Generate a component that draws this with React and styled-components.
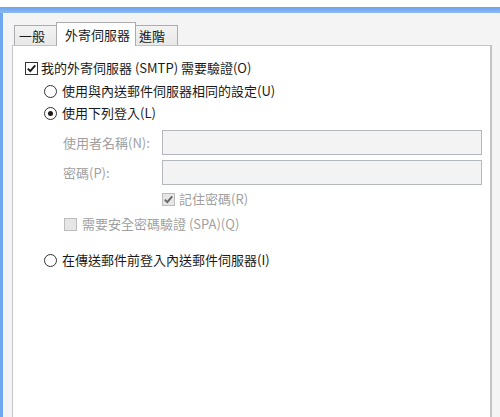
import styled, { createGlobalStyle } from "styled-components";

const GlobalStyle = createGlobalStyle`
  html, body {
    margin: 0;
    padding: 0;
    background: #fff;
  }
  body {
    font-family: "Noto Sans CJK TC", "Liberation Sans", sans-serif;
    font-size: 13px;
    color: #1a1a1a;
  }
`;

const Screen = styled.div`
  height: 417px;
  overflow: hidden;
  padding-top: 7px;
  box-sizing: border-box;
  display: flex;
  flex-direction: column;
`;

const TitleEdge = styled.div`
  height: 6px;
  flex: none;
  background: linear-gradient(#6aa2ec, #8dbaf3);
`;

const Frame = styled.div`
  flex: 1;
  display: flex;
  flex-direction: column;
  background: #f4f4f4;
  border-left: 3px solid #71a7ee;
  padding: 0 8px 0 9px;
`;

const TabRow = styled.div`
  display: flex;
  align-items: flex-end;
  height: 32px;
  padding-left: 2px;
  position: relative;
  z-index: 1;
`;

const Tab = styled.div`
  box-sizing: border-box;
  height: ${(p) => (p.$active ? 24 : 20)}px;
  margin: 0 ${(p) => (p.$active ? -2 : 0)}px ${(p) => (p.$active ? -1 : 0)}px;
  padding: ${(p) => (p.$active ? "0 5px 0 8px" : "0 12px 0 4px")};
  border: 1px solid #acacac;
  border-bottom: none;
  background: ${(p) => (p.$active ? "#fff" : "linear-gradient(#f3f3f3, #e8e8e8)")};
  display: flex;
  align-items: center;
  line-height: 1;
  position: relative;
  z-index: ${(p) => (p.$active ? 2 : 1)};
  color: #1a1a1a;
`;

const Panel = styled.div`
  flex: 1;
  background: #fff;
  border: 1px solid #c4c4c4;
  border-right-width: 2px;
  border-bottom: none;
  padding: 13px 8px 0 12px;
`;

const Row = styled.div`
  display: flex;
  align-items: center;
  height: ${(p) => p.$h || 18}px;
  margin-top: ${(p) => p.$gap || 0}px;
  padding-left: ${(p) => p.$indent || 0}px;
  color: ${(p) => (p.$disabled ? "#a0a0a0" : "#1a1a1a")};
  white-space: nowrap;
  line-height: 18px;
`;

const Box = styled.span`
  width: 13px;
  height: 13px;
  box-sizing: border-box;
  flex: none;
  border: 1px solid ${(p) => (p.$disabled ? "#bcbcbc" : "#333")};
  background: ${(p) => (p.$disabled ? "#e6e6e6" : "#fff")};
  margin-right: ${(p) => p.$gap}px;
  display: flex;
  align-items: center;
  justify-content: center;
`;

const RadioCircle = styled.span`
  width: 13px;
  height: 13px;
  box-sizing: border-box;
  flex: none;
  border-radius: 50%;
  border: 1px solid #333;
  background: #fff;
  margin-right: 5px;
  display: flex;
  align-items: center;
  justify-content: center;

  &::after {
    content: "";
    width: 5px;
    height: 5px;
    border-radius: 50%;
    background: ${(p) => (p.$checked ? "#1a1a1a" : "transparent")};
  }
`;

const FieldLabel = styled.span`
  width: 99px;
  flex: none;
  color: #a0a0a0;
`;

const Input = styled.div`
  flex: 1;
  height: 25px;
  box-sizing: border-box;
  border: 1px solid #b4b7be;
  background: #f3f3f4;
`;

const Check = ({ checked, disabled, gap = 3 }) => (
  <Box $disabled={disabled} $gap={gap}>
    {checked && (
      <svg width="11" height="11" viewBox="0 0 11 11">
        <path
          d="M1.8 5.6 L4.3 8.2 L9.2 2.4"
          fill="none"
          stroke={disabled ? "#666" : "#1a1a1a"}
          strokeWidth="1.9"
        />
      </svg>
    )}
  </Box>
);

const App = () => {
	return (
		<Screen>
			<GlobalStyle />
			<TitleEdge />
			<Frame>
				<TabRow>
					<Tab>一般</Tab>
					<Tab $active>外寄伺服器</Tab>
					<Tab>進階</Tab>
				</TabRow>
				<Panel>
					<Row>
						<Check checked />
						我的外寄伺服器 (SMTP) 需要驗證(O)
					</Row>
					<Row $gap={5} $indent={19}>
						<RadioCircle />
						使用與內送郵件伺服器相同的設定(U)
					</Row>
					<Row $gap={4} $indent={19}>
						<RadioCircle $checked />
						使用下列登入(L)
					</Row>
					<Row $gap={8} $indent={38} $h={25}>
						<FieldLabel>使用者名稱(N):</FieldLabel>
						<Input />
					</Row>
					<Row $gap={5} $indent={38} $h={25}>
						<FieldLabel>密碼(P):</FieldLabel>
						<Input />
					</Row>
					<Row $gap={5} $indent={137} $disabled>
						<Check checked disabled gap={4} />
						記住密碼(R)
					</Row>
					<Row $gap={7} $indent={39} $disabled>
						<Check disabled gap={5} />
						需要安全密碼驗證 (SPA)(Q)
					</Row>
					<Row $gap={18} $indent={19}>
						<RadioCircle />
						在傳送郵件前登入內送郵件伺服器(I)
					</Row>
				</Panel>
			</Frame>
		</Screen>
	);
};

export default App;
